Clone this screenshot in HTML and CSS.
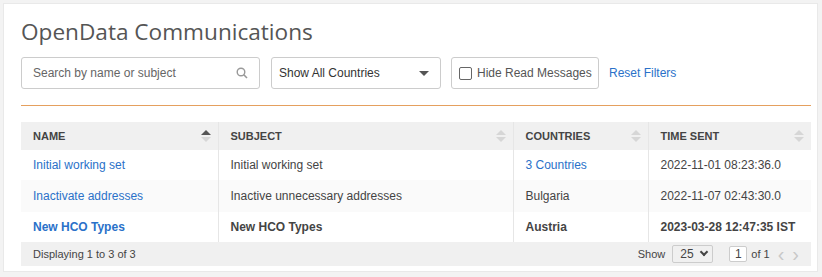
FILE: index.html
```html
<!DOCTYPE html>
<html lang="en">
<head>
    <meta charset="UTF-8">
    <title>OpenData Communications</title>
    <link rel="stylesheet" href="styles.css">
</head>
<body>
    <div class="card">
        <h1>OpenData Communications</h1>

        <div class="filters">
            <div class="search">
                <span class="placeholder">Search by name or subject</span>
                <svg class="search-icon" width="12" height="12" viewBox="0 0 12 12">
                    <circle cx="5" cy="5" r="3.8" fill="none" stroke="#999" stroke-width="1.4"/>
                    <line x1="7.8" y1="7.8" x2="11" y2="11" stroke="#999" stroke-width="1.6"/>
                </svg>
            </div>
            <div class="select">
                <span>Show All Countries</span>
                <span class="caret"></span>
            </div>
            <label class="check">
                <span class="box"></span>
                Hide Read Messages
            </label>
            <a class="reset" href="#">Reset Filters</a>
        </div>

        <div class="divider"></div>

        <table class="grid">
            <thead>
                <tr>
                    <th class="col-name">Name <span class="sort asc"></span></th>
                    <th class="col-subject">Subject <span class="sort"></span></th>
                    <th class="col-countries">Countries <span class="sort"></span></th>
                    <th class="col-time">Time Sent <span class="sort"></span></th>
                </tr>
            </thead>
            <tbody>
                <tr>
                    <td><a href="#">Initial working set</a></td>
                    <td>Initial working set</td>
                    <td><a href="#">3 Countries</a></td>
                    <td>2022-11-01 08:23:36.0</td>
                </tr>
                <tr class="alt">
                    <td><a href="#">Inactivate addresses</a></td>
                    <td>Inactive unnecessary addresses</td>
                    <td>Bulgaria</td>
                    <td>2022-11-07 02:43:30.0</td>
                </tr>
                <tr class="unread">
                    <td><a href="#">New HCO Types</a></td>
                    <td>New HCO Types</td>
                    <td>Austria</td>
                    <td>2023-03-28 12:47:35 IST</td>
                </tr>
            </tbody>
        </table>

        <div class="footer">
            <span>Displaying 1 to 3 of 3</span>
            <div class="pager">
                <span>Show</span>
                <span class="page-size">25 <span class="chevron"></span></span>
                <span class="page-num">1</span>
                <span>of 1</span>
                <span class="arrow">&lsaquo;</span>
                <span class="arrow">&rsaquo;</span>
            </div>
        </div>
    </div>
</body>
</html>
```

FILE: styles.css
```css
* {
    margin: 0;
    padding: 0;
    box-sizing: border-box;
}

body {
    background: #f3f3f3;
    padding: 3px 4px 5px 3px;
    font-family: "Liberation Sans", Arial, sans-serif;
    font-size: 12px;
    color: #333;
}

.card {
    background: white;
    border: 1px solid #e9e9e9;
    height: 269px;
    padding: 12px 6px 0 17px;
}

h1 {
    font-family: "Open Sans", sans-serif;
    font-size: 22.6px;
    font-weight: 400;
    line-height: 32px;
    color: #555;
}

.filters {
    display: flex;
    align-items: center;
    gap: 10px;
    margin-top: 9px;
    height: 32px;
}

.search,
.select,
.check {
    height: 32px;
    border: 1px solid #ccc;
    border-radius: 3px;
    display: flex;
    align-items: center;
}

.search {
    width: 239px;
    padding: 0 11px;
    justify-content: space-between;
    margin-right: 1px;
}

.placeholder {
    color: #666;
}

.select {
    width: 170px;
    padding: 0 11px 0 7px;
    justify-content: space-between;
    color: #333;
}

.caret {
    width: 0;
    height: 0;
    border-left: 5px solid transparent;
    border-right: 5px solid transparent;
    border-top: 5px solid #555;
}

.check {
    width: 148px;
    padding: 0 7px;
    gap: 5px;
    color: #555;
    font-size: 12px;
    white-space: nowrap;
}

.box {
    flex: none;
    width: 13px;
    height: 13px;
    border: 1px solid #666;
    border-radius: 2px;
}

.reset {
    color: #2a71c9;
    text-decoration: none;
}

.divider {
    margin-top: 16px;
    border-top: 1px solid #e5a05e;
}

.grid {
    margin-top: 16px;
    width: 790px;
    border-collapse: collapse;
}

.grid th {
    background: #f0f0f0;
    height: 28px;
    text-align: left;
    font-size: 11px;
    font-weight: bold;
    text-transform: uppercase;
    color: #444;
    padding: 0 10px 0 12px;
    position: relative;
}

.grid td {
    padding: 0 12px;
    height: 30px;
    color: #444;
}

.grid th + th,
.grid td + td {
    border-left: 1px solid #e6e6e6;
}

.col-name { width: 197px; }
.col-subject { width: 295px; }
.col-countries { width: 135px; }

.grid tr.alt td {
    background: #fafafa;
    height: 32px;
}

.grid tr.unread td {
    font-weight: bold;
}

.grid a {
    color: #2a71c9;
    text-decoration: none;
}

.sort {
    position: absolute;
    right: 7px;
    top: 8px;
    width: 10px;
    height: 12px;
}

.sort::before,
.sort::after {
    content: "";
    position: absolute;
    left: 0;
    border-left: 5px solid transparent;
    border-right: 5px solid transparent;
}

.sort::before {
    top: 0;
    border-bottom: 5px solid #d6d6d6;
}

.sort::after {
    bottom: 0;
    border-top: 5px solid #d6d6d6;
}

.sort.asc::before {
    border-bottom-color: #555;
}

.footer {
    width: 790px;
    height: 24px;
    background: #f0f0f0;
    display: flex;
    align-items: center;
    justify-content: space-between;
    padding: 0 12px;
    font-size: 11px;
    color: #444;
}

.pager {
    display: flex;
    align-items: center;
    gap: 4px;
}

.page-size {
    display: flex;
    align-items: center;
    justify-content: space-between;
    width: 41px;
    height: 18px;
    margin: 0 12px 0 3px;
    padding: 0 5px 0 7px;
    border: 1px solid #ccc;
    border-radius: 2px;
    font-size: 12px;
}

.chevron {
    width: 6px;
    height: 6px;
    border-right: 2px solid #444;
    border-bottom: 2px solid #444;
    transform: rotate(45deg);
    margin-top: -4px;
}

.page-num {
    width: 18px;
    height: 16px;
    background: white;
    border: 1px solid #ccc;
    border-radius: 2px;
    text-align: center;
    line-height: 14px;
    font-size: 12px;
}

.arrow {
    color: #c8c8c8;
    font-size: 20px;
    margin-left: 4px;
    line-height: 12px;
}
```
